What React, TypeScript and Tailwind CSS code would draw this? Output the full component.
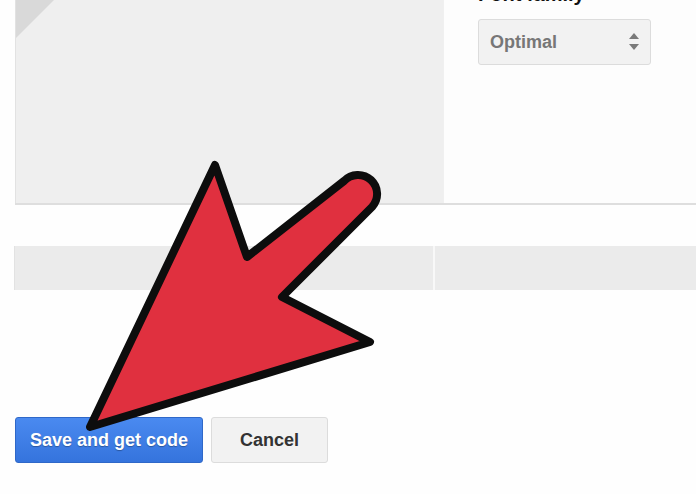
const Arrow = () => (
    <svg className="absolute left-0 top-0" width="696" height="494" viewBox="0 0 696 494">
        <path
            d="M90,427 L215,165 L247,257 L344,181 A19,19 0 0 1 372,207 L282,297 L370,342 Z"
            fill="#e0303f"
            stroke="#0d0d0d"
            strokeWidth="8"
            strokeLinejoin="round"
        />
    </svg>
);

const App = () => {
    return (
        <div className="relative w-[696px] h-[494px] overflow-hidden bg-[#fefefe] font-['Liberation_Sans',Arial,sans-serif]">
            {/* top panel */}
            <div className="ml-[15px] flex h-[205px] border-b-2 border-[#dedede]">
                <div className="relative w-[428px] bg-[#efefef] border-l border-[#e2e2e2] overflow-hidden">
                    <div className="absolute left-0 top-0 w-0 h-0 border-t-[38px] border-r-[38px] border-t-[#d9d9d9] border-r-transparent" />
                </div>
                <div className="flex-1 bg-[#fdfdfd] pl-[34px] border-l border-[#f0f0f0]">
                    <div className="mt-[-16px] text-[20px] leading-[20px] font-bold text-[#111]">Font family</div>
                    <div className="mt-[15px] w-[173px] h-[46px] flex items-center justify-between pl-[11px] pr-[10px] bg-[#f2f2f2] border border-[#dcdcdc] rounded-[3px]">
                        <span className="text-[18px] font-bold text-[#777]">Optimal</span>
                        <svg width="12" height="22" viewBox="0 0 12 22">
                            <path d="M6,2 L11,8 L1,8 Z" fill="#7a7a7a" />
                            <path d="M1,13 L11,13 L6,19 Z" fill="#7a7a7a" />
                        </svg>
                    </div>
                </div>
            </div>

            {/* grey row */}
            <div className="ml-[14px] mt-[41px] h-[44px] flex bg-[#ebebeb] border-l border-[#e2e2e2]">
                <div className="w-[420px] border-r-2 border-[#f8f8f8]" />
                <div className="flex-1" />
            </div>

            {/* buttons */}
            <div className="ml-[15px] mt-[127px] flex gap-[8px]">
                <button className="w-[188px] h-[46px] rounded-[3px] border border-[#2f68c8] bg-gradient-to-b from-[#4a8af0] to-[#3574dd] text-white text-[18px] font-bold [text-shadow:0_1px_1px_rgba(0,0,0,0.3)]">
                    Save and get code
                </button>
                <button className="w-[117px] h-[46px] rounded-[3px] border border-[#dcdcdc] bg-[#f2f2f2] text-[#333] text-[18px] font-bold">
                    Cancel
                </button>
            </div>

            <Arrow />
        </div>
    );
};

export default App;
